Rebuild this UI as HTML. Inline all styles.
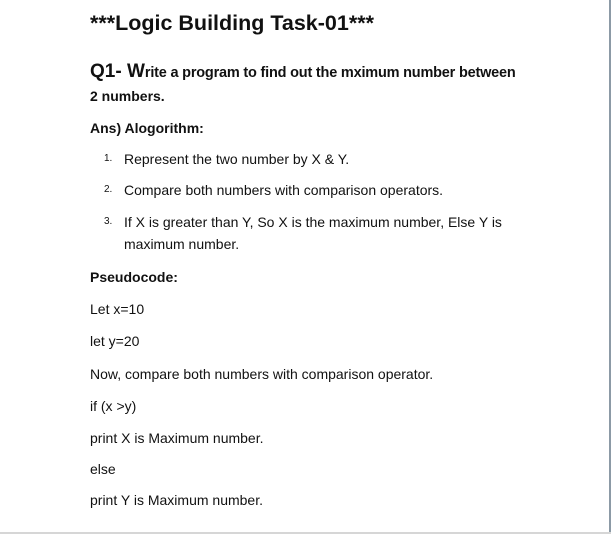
<!DOCTYPE html>
<html><head><style>
body{margin:0;width:611px;height:534px;background:#fff;position:relative;overflow:hidden;font-family:"Liberation Sans",sans-serif;color:#111}
.l{position:absolute;left:90px;font-size:14px;line-height:16px;white-space:nowrap}
.b{font-weight:bold}
.n{position:absolute;left:104px;font-size:10px;line-height:16px}
</style></head><body>
<div style="position:absolute;right:0;top:0;width:2px;height:534px;background:#8c9aa6"></div>
<div style="position:absolute;left:0;bottom:0;width:611px;height:2px;background:#d6d6d6"></div>
<div class="l b" style="top:10px;font-size:21.5px;line-height:26px">***Logic Building Task-01***</div>
<div class="l b" style="top:60px;line-height:24px"><span style="font-size:19px">Q1- W</span><span style="font-size:14.5px;letter-spacing:-0.2px">rite a program to find out the mximum number between</span></div>
<div class="l b" style="top:88px">2 numbers.</div>
<div class="l b" style="top:120px">Ans) Alogorithm:</div>
<div class="n" style="top:151px">1.</div><div class="l" style="left:124px;top:151px">Represent the two number by X &amp; Y.</div>
<div class="n" style="top:182px">2.</div><div class="l" style="left:124px;top:182px">Compare both numbers with comparison operators.</div>
<div class="n" style="top:214px">3.</div><div class="l" style="left:124px;top:214px">If X is greater than Y, So X is the maximum number, Else Y is</div>
<div class="l" style="left:124px;top:236px">maximum number.</div>
<div class="l b" style="top:269px">Pseudocode:</div>
<div class="l" style="top:301px">Let x=10</div>
<div class="l" style="top:333px">let y=20</div>
<div class="l" style="top:366px">Now, compare both numbers with comparison operator.</div>
<div class="l" style="top:398px">if (x &gt;y)</div>
<div class="l" style="top:430px">print X is Maximum number.</div>
<div class="l" style="top:461px">else</div>
<div class="l" style="top:492px">print Y is Maximum number.</div>
</body></html>
